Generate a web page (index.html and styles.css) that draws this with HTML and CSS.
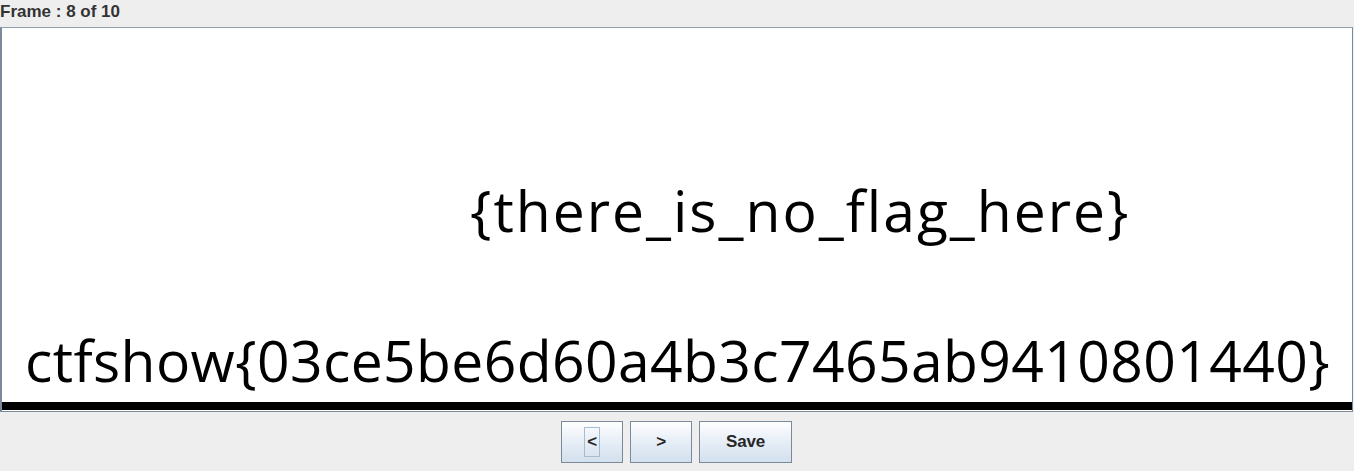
FILE: index.html
```html
<!DOCTYPE html>
<html>
<head>
<meta charset="utf-8">
<link rel="stylesheet" href="styles.css">
</head>
<body>
<div class="app">
  <div class="title">Frame : 8 of 10</div>
  <div class="panel">
    <div class="canvas">
      <div class="line line1">{there_is_no_flag_here}</div>
      <div class="line line2">ctfshow{03ce5be6d60a4b3c7465ab9410801440}</div>
    </div>
    <div class="bar"></div>
  </div>
  <div class="buttons">
    <button class="btn btn-nav"><span class="focus">&lt;</span></button>
    <button class="btn btn-nav">&gt;</button>
    <button class="btn btn-save">Save</button>
  </div>
</div>
</body>
</html>
```
FILE: styles.css
```css
html, body {
  margin: 0;
  padding: 0;
  background: #eeeeee;
}
.app {
  width: 1354px;
  height: 471px;
  display: flex;
  flex-direction: column;
  font-family: "Liberation Sans", Arial, sans-serif;
}
.title {
  height: 27px;
  font-size: 17px;
  font-weight: bold;
  letter-spacing: 0;
  color: #333333;
  line-height: 20px;
  padding-left: 0;
  padding-top: 2px;
  box-sizing: border-box;
}
.panel {
  width: 1353px;
  height: 385px;
  box-sizing: border-box;
  border: 1px solid #7a8a99;
  border-left-width: 2px;
  border-top-color: #8f9fae;
  background: #ffffff;
  display: flex;
  flex-direction: column;
}
.canvas {
  flex: 1;
  display: flex;
  flex-direction: column;
  font-family: "Open Sans", "Noto Sans", sans-serif;
  color: #000;
  overflow: hidden;
}
.line {
  white-space: nowrap;
  font-size: 57px;
  line-height: 60px;
}
.line1 {
  padding-left: 468px;
  margin-top: 152px;
  letter-spacing: 2px;
}
.line2 {
  padding-left: 23px;
  margin-top: 90px;
  letter-spacing: 0.4px;
}
.bar {
  height: 8px;
  background: #000;
  margin-bottom: 1px;
}
.buttons {
  display: flex;
  gap: 7px;
  padding-left: 561px;
  padding-top: 9px;
}
.btn {
  height: 42px;
  box-sizing: border-box;
  border: 1px solid #7a8a99;
  border-radius: 0;
  background: linear-gradient(#ffffff 0%, #e8eff7 45%, #d3e0ee 100%);
  font-family: "Liberation Sans", Arial, sans-serif;
  font-weight: bold;
  font-size: 17px;
  letter-spacing: -0.2px;
  color: #262626;
  padding: 0;
  display: flex;
  align-items: center;
  justify-content: center;
}
.btn-nav {
  width: 62px;
}
.btn-save {
  width: 93px;
}
.focus {
  border: 1px solid #a8bccf;
  padding: 6px 2px;
  line-height: 16px;
}
```
